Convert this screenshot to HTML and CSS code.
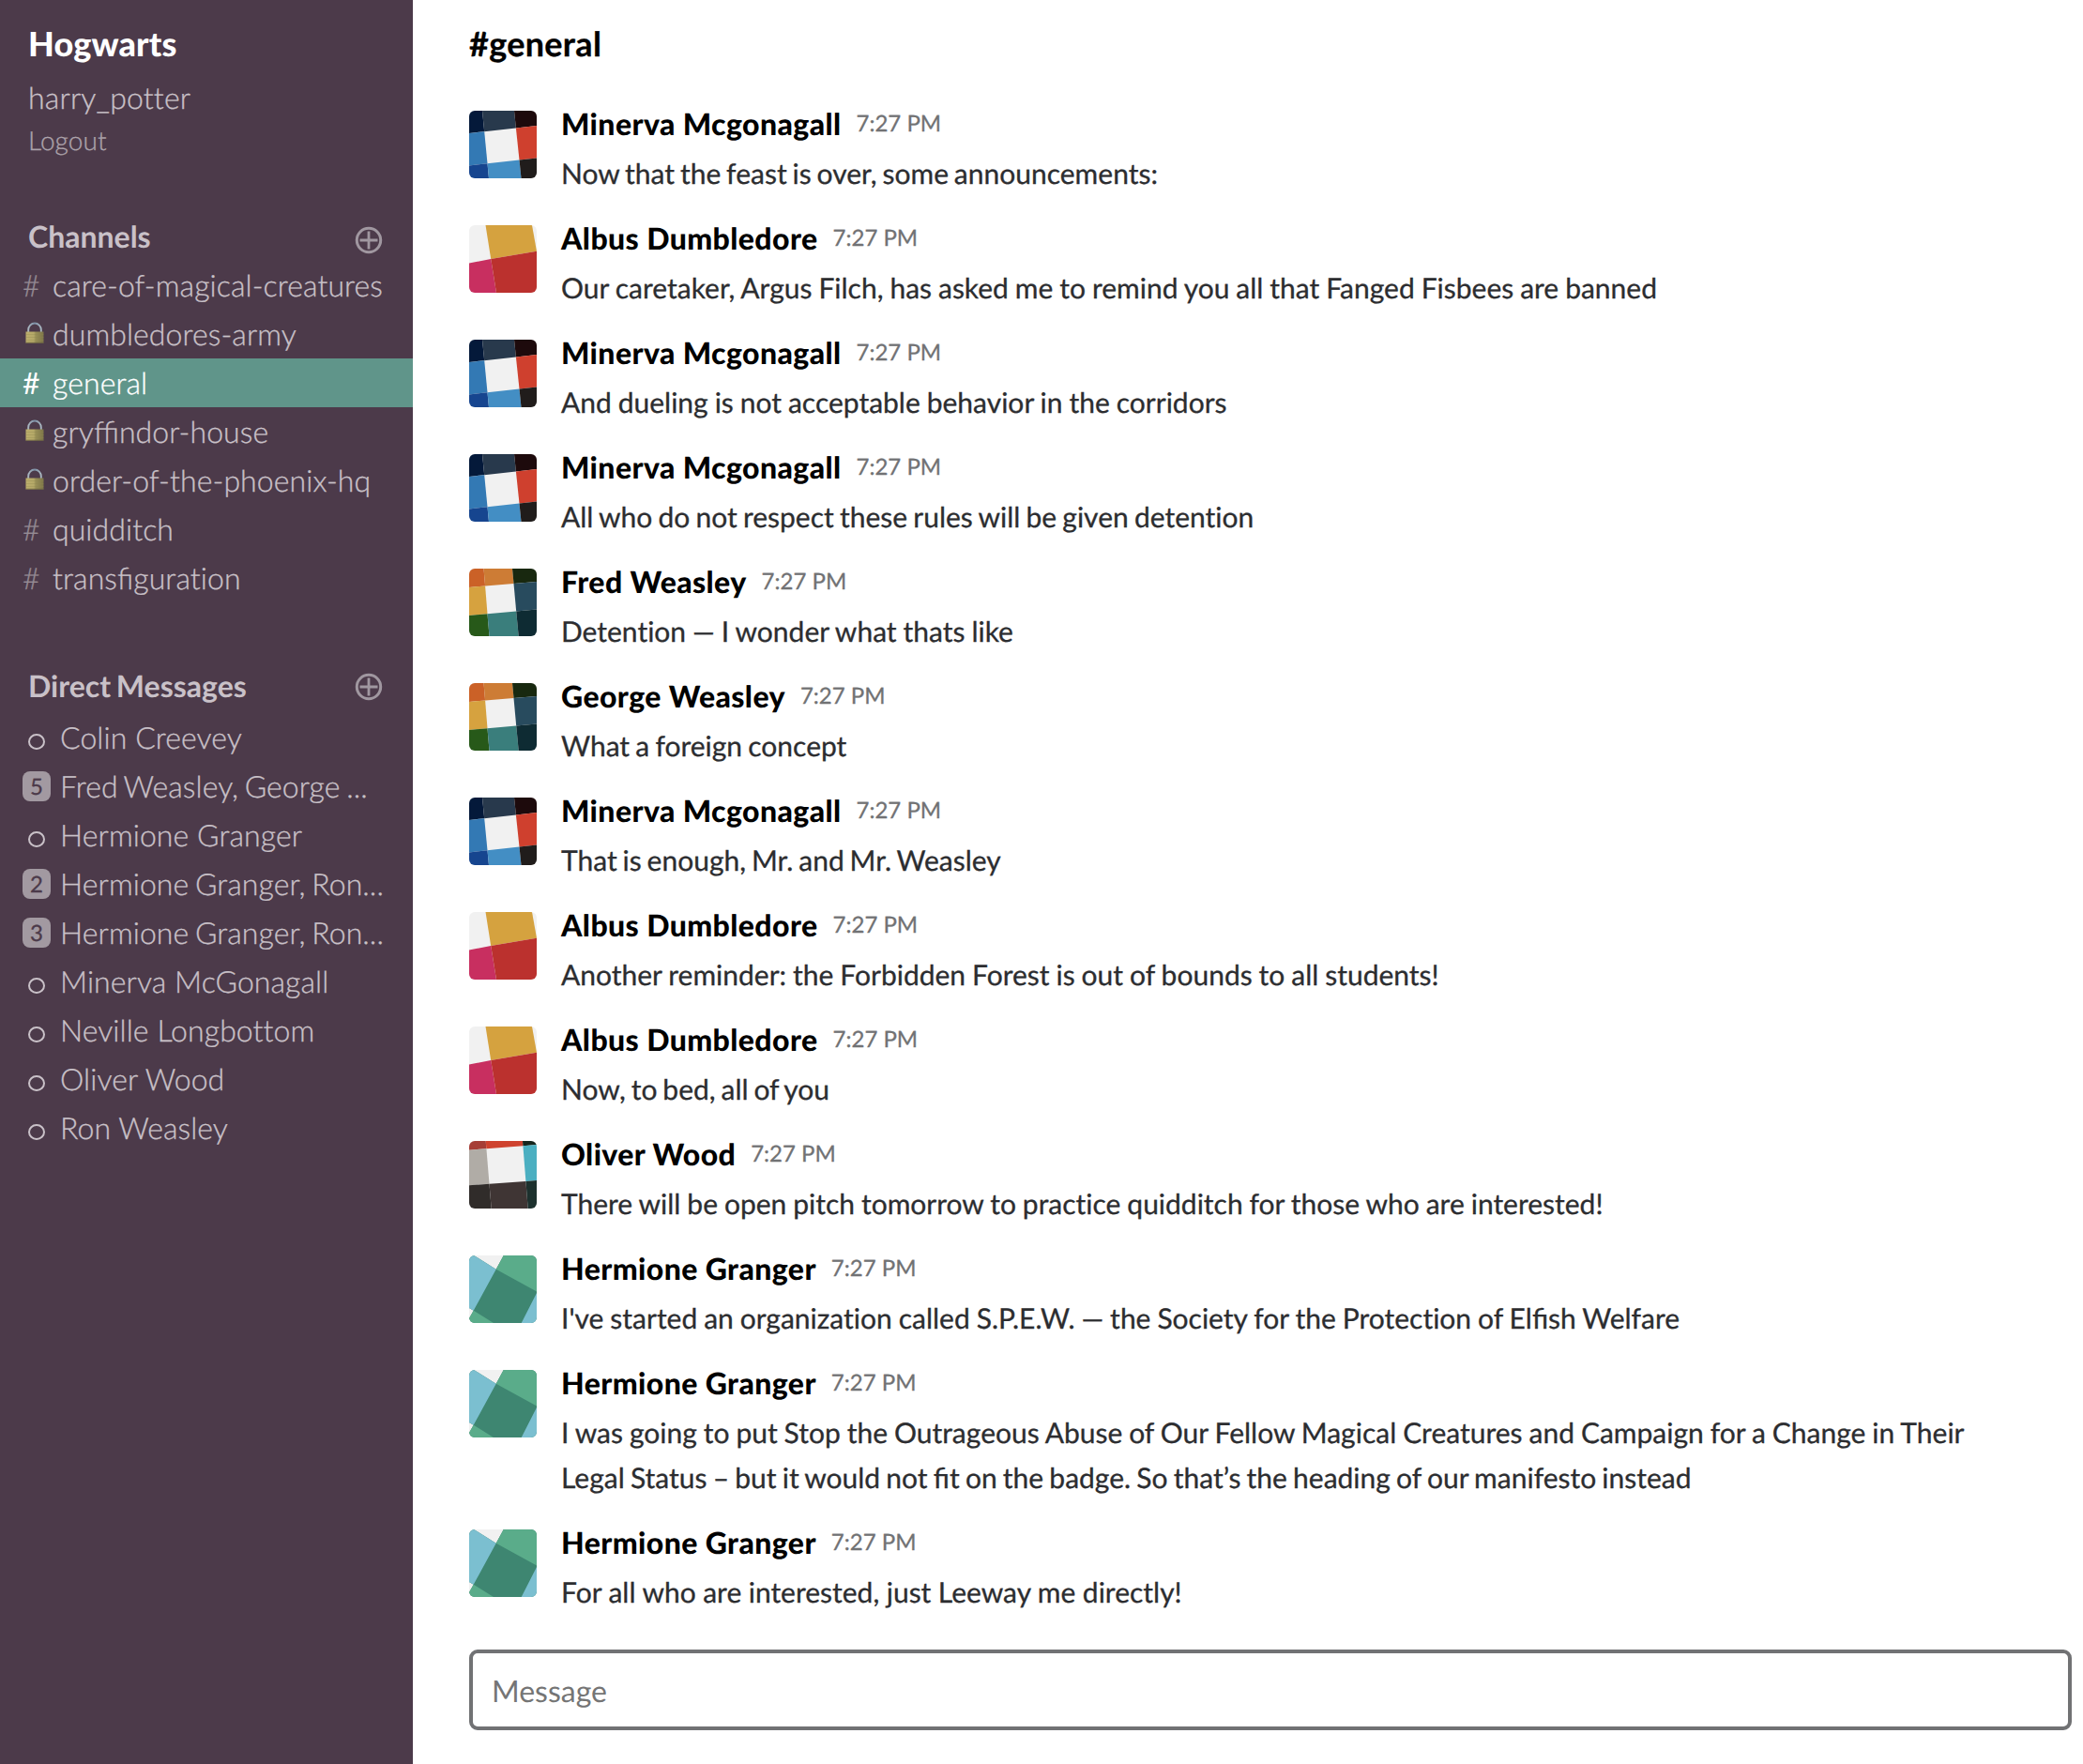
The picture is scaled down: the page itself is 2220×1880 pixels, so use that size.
FILE: index.html
```html
<!DOCTYPE html>
<html lang="en">
<head>
<meta charset="utf-8">
<title>Leeway</title>
<link rel="stylesheet" href="styles.css">
</head>
<body>
<svg class="sprite" aria-hidden="true">
  <defs>
    <linearGradient id="brass" x1="0" x2="1" y1="0" y2="0">
      <stop offset="0" stop-color="#bcae6c"/><stop offset=".45" stop-color="#b5a968"/><stop offset=".55" stop-color="#999057"/><stop offset="1" stop-color="#7d7548"/>
    </linearGradient>
    <linearGradient id="steel" x1="0" x2="1" y1="0" y2="0">
      <stop offset="0" stop-color="#a9b6c0"/><stop offset=".5" stop-color="#7b8fa6"/><stop offset="1" stop-color="#a9b6c0"/>
    </linearGradient>
  </defs>
  <symbol id="plus" viewBox="0 0 30 30"><circle cx="15" cy="15" r="12.7" fill="none" stroke="currentColor" stroke-width="3"/><path d="M15 5.5v19M5.5 15h19" stroke="currentColor" stroke-width="2.8"/></symbol>
  <symbol id="lock" viewBox="0 0 20 24"><path d="M3.2 11V8.5a6.8 7 0 0 1 13.6 0V11" fill="none" stroke="url(#steel)" stroke-width="1.9"/><path d="M.5 10.5h19v12H.5z" fill="url(#brass)"/><path d="M.5 13.5h19M.5 16.5h19M.5 19.5h19" stroke="#8f8650" stroke-width=".6" opacity=".5"/><path d="M.5 22.2h19" stroke="#6f6741" stroke-width=".8"/></symbol>
  <symbol id="minerva" viewBox="0 0 72 72">
    <rect width="72" height="72" fill="#f1f1f1"/>
    <path fill="#04193a" d="M0 0H14L16.2 22.2 0 24z"/><path fill="#28394c" d="M14 0H48L49.9 18.4 16.2 22.2z"/><path fill="#1d0a0c" d="M48 0H72V16L49.9 18.4z"/>
    <path fill="#3379b4" d="M0 24 16.2 22.2 19.5 56.3 0 58.5z"/><path fill="#cf402e" d="M49.9 18.4 72 16V50.5L53.5 52.5z"/>
    <path fill="#16458f" d="M0 58.5 19.5 56.3 21 72H0z"/><path fill="#438ec4" d="M19.5 56.3 53.5 52.5 55.5 72H21z"/><path fill="#201c1b" d="M53.5 52.5 72 50.5V72H55.5z"/>
  </symbol>
  <symbol id="weasley" viewBox="0 0 72 72">
    <rect width="72" height="72" fill="#f1f1f1"/>
    <path fill="#cb6127" d="M0 0H15.5L17.1 18.5 0 20z"/><path fill="#cd7c35" d="M15.5 0H46L47.5 16 17.1 18.5z"/><path fill="#18280f" d="M46 0H72V14L47.5 16z"/>
    <path fill="#d6a23f" d="M0 20 17.1 18.5 19.5 48.2 0 50z"/><path fill="#284b5e" d="M47.5 16 72 14V43.5L50.2 45.5z"/>
    <path fill="#275919" d="M0 50 19.5 48.2 21.5 72H0z"/><path fill="#3a7e7c" d="M19.5 48.2 50.2 45.5 52.7 72H21.5z"/><path fill="#0e2b33" d="M50.2 45.5 72 43.5V72H52.7z"/>
  </symbol>
  <symbol id="oliver" viewBox="0 0 72 72">
    <rect width="72" height="72" fill="#f1f1f1"/>
    <path fill="#a63e36" d="M0 0H17.7L18.4 8.2 0 9.7z"/><path fill="#cf432f" d="M17.7 0H57L57.4 5.2 18.4 8.2z"/><path fill="#16251c" d="M57 0H72V4L57.4 5.2z"/>
    <path fill="#b0aca6" d="M0 9.7 18.4 8.2 21.5 45.7 0 47.3z"/><path fill="#4bafc1" d="M57.4 5.2 72 4V42L60.4 42.9z"/>
    <path fill="#302c2a" d="M0 47.3 21.5 45.7 23.7 72H0z"/><path fill="#3f3534" d="M21.5 45.7 60.4 42.9 62.7 72H23.7z"/><path fill="#1d312e" d="M60.4 42.9 72 42V72H62.7z"/>
  </symbol>
  <symbol id="albus" viewBox="0 0 72 72">
    <rect width="72" height="72" fill="#f1f1f1"/>
    <path fill="#d5a23f" d="M17.5 0H67L72 27.7 23.2 36z"/><path fill="#c82f60" d="M0 40.5 23.2 36 29 72H0z"/><path fill="#bb312e" d="M23.2 36 72 27.7V72H29z"/>
  </symbol>
  <symbol id="hermione" viewBox="0 0 72 72">
    <rect width="72" height="72" fill="#3e8671"/>
    <path fill="#f1f1f1" d="M5 0H36.7L28.7 14.7zM0 56 4.7 58.7 0 67z"/>
    <path fill="#7bbfd0" d="M0 0H5L28.7 14.7 4.7 58.7 0 56zM72 40V72H55.7z"/>
    <path fill="#5aac8a" d="M36.7 0H72V38.5L28.7 14.7zM0 67 4.7 58.7 26 72H0z"/>
  </symbol>
</svg>
<div class="app">
  <aside class="sidebar">
    <h1 class="team">Hogwarts</h1>
    <div class="user">harry_potter</div>
    <div class="logout"><a>Logout</a></div>
    <div class="section-head channels-head"><h2>Channels</h2><svg class="plus"><use href="#plus"/></svg></div>
    <ul class="list channels">
      <li><span class="mark">#</span><span class="label">care-of-magical-creatures</span></li>
      <li><span class="mark"><svg class="lock"><use href="#lock"/></svg></span><span class="label">dumbledores-army</span></li>
      <li class="active"><span class="mark">#</span><span class="label">general</span></li>
      <li><span class="mark"><svg class="lock"><use href="#lock"/></svg></span><span class="label">gry<span class="lig">ffi</span>ndor-house</span></li>
      <li><span class="mark"><svg class="lock"><use href="#lock"/></svg></span><span class="label">order-of-the-phoenix-hq</span></li>
      <li><span class="mark">#</span><span class="label">quidditch</span></li>
      <li><span class="mark">#</span><span class="label">trans<span class="lig">fi</span>guration</span></li>
    </ul>
    <div class="section-head direct-head"><h2>Direct Messages</h2><svg class="plus"><use href="#plus"/></svg></div>
    <ul class="list directs">
      <li><span class="mark"><i class="dot"></i></span><span class="label">Colin Creevey</span></li>
      <li class="group"><span class="mark"><b class="count">5</b></span><span class="label">Fred Weasley, George ...</span></li>
      <li><span class="mark"><i class="dot"></i></span><span class="label">Hermione Granger</span></li>
      <li class="group"><span class="mark"><b class="count">2</b></span><span class="label">Hermione Granger, Ron...</span></li>
      <li class="group"><span class="mark"><b class="count">3</b></span><span class="label">Hermione Granger, Ron...</span></li>
      <li><span class="mark"><i class="dot"></i></span><span class="label">Minerva McGonagall</span></li>
      <li><span class="mark"><i class="dot"></i></span><span class="label">Neville Longbottom</span></li>
      <li><span class="mark"><i class="dot"></i></span><span class="label">Oliver Wood</span></li>
      <li><span class="mark"><i class="dot"></i></span><span class="label">Ron Weasley</span></li>
    </ul>
  </aside>
  <main class="main">
    <h2 class="title">#general</h2>
    <div class="messages">
      <article class="message"><svg class="avatar"><use href="#minerva"/></svg><div class="body"><header><strong>Minerva Mcgonagall</strong><time>7:27 PM</time></header><p class="tight">Now that the feast is over, some announcements:</p></div></article>
      <article class="message"><svg class="avatar"><use href="#albus"/></svg><div class="body"><header><strong>Albus Dumbledore</strong><time>7:27 PM</time></header><p>Our caretaker, Argus Filch, has asked me to remind you all that Fanged Fisbees are banned</p></div></article>
      <article class="message"><svg class="avatar"><use href="#minerva"/></svg><div class="body"><header><strong>Minerva Mcgonagall</strong><time>7:27 PM</time></header><p>And dueling is not acceptable behavior in the corridors</p></div></article>
      <article class="message"><svg class="avatar"><use href="#minerva"/></svg><div class="body"><header><strong>Minerva Mcgonagall</strong><time>7:27 PM</time></header><p class="snug">All who do not respect these rules will be given detention</p></div></article>
      <article class="message"><svg class="avatar"><use href="#weasley"/></svg><div class="body"><header><strong>Fred Weasley</strong><time>7:27 PM</time></header><p>Detention — I wonder what thats like</p></div></article>
      <article class="message"><svg class="avatar"><use href="#weasley"/></svg><div class="body"><header><strong>George Weasley</strong><time>7:27 PM</time></header><p class="snug">What a foreign concept</p></div></article>
      <article class="message"><svg class="avatar"><use href="#minerva"/></svg><div class="body"><header><strong>Minerva Mcgonagall</strong><time>7:27 PM</time></header><p class="tight">That is enough, Mr. and Mr. Weasley</p></div></article>
      <article class="message"><svg class="avatar"><use href="#albus"/></svg><div class="body"><header><strong>Albus Dumbledore</strong><time>7:27 PM</time></header><p>Another reminder: the Forbidden Forest is out of bounds to all students!</p></div></article>
      <article class="message"><svg class="avatar"><use href="#albus"/></svg><div class="body"><header><strong>Albus Dumbledore</strong><time>7:27 PM</time></header><p class="tight">Now, to bed, all of you</p></div></article>
      <article class="message"><svg class="avatar"><use href="#oliver"/></svg><div class="body"><header><strong>Oliver Wood</strong><time>7:27 PM</time></header><p>There will be open pitch tomorrow to practice quidditch for those who are interested!</p></div></article>
      <article class="message"><svg class="avatar"><use href="#hermione"/></svg><div class="body"><header><strong>Hermione Granger</strong><time>7:27 PM</time></header><p>I've started an organization called S.P.E.W. — the Society for the Protection of El<span class="lig">fi</span>sh Welfare</p></div></article>
      <article class="message"><svg class="avatar"><use href="#hermione"/></svg><div class="body"><header><strong>Hermione Granger</strong><time>7:27 PM</time></header><p>I was going to put Stop the Outrageous Abuse of Our Fellow Magical Creatures and Campaign for a Change in Their<br><span class="snug">Legal Status – but it would not <span class="lig">fi</span>t on the badge. So that’s the heading of our manifesto instead</span></p></div></article>
      <article class="message"><svg class="avatar"><use href="#hermione"/></svg><div class="body"><header><strong>Hermione Granger</strong><time>7:27 PM</time></header><p class="wide">For all who are interested, just Leeway me directly!</p></div></article>
    </div>
    <input class="composer" type="text" placeholder="Message">
  </main>
</div>
</body>
</html>
```
FILE: styles.css
```css
* { box-sizing: border-box; margin: 0; padding: 0; }
body { font-family: Lato, "Liberation Sans", sans-serif; font-feature-settings: "liga" 0; background: #fff; text-rendering: geometricPrecision; }
.lig { font-feature-settings: "liga" 1; letter-spacing: 0; }
.sprite { display: block; width: 0; height: 0; overflow: hidden; }
.app { display: grid; grid-template-columns: 440px 1fr; height: 1880px; }

.sidebar { background: #4c3a4a; color: #c9c1c8; padding-top: 24px; font-size: 32px; font-weight: 300; letter-spacing: .08px; -webkit-text-stroke: .3px currentColor; }
.team { color: #fff; font-size: 36px; line-height: 44px; font-weight: 900; padding-left: 30px; letter-spacing: .15px; -webkit-text-stroke: 0; }
.user { line-height: 52px; margin-top: 10px; padding-left: 30px; letter-spacing: .16px; }
.logout { font-size: 28px; line-height: 36px; margin-top: 1px; padding-left: 30px; color: #aca3ab; }
.section-head { display: flex; justify-content: space-between; align-items: center; height: 44px; padding: 0 32px 0 30px; }
.section-head h2 { font-size: 32px; line-height: 44px; font-weight: 700; letter-spacing: 0; word-spacing: -2px; -webkit-text-stroke: 0; }
.channels-head { margin-top: 63px; }
.direct-head { margin-top: 67px; }
.plus { width: 30px; height: 30px; color: #a097a0; margin-top: 8px; }
.direct-head .plus { margin-top: 2px; }
.list { list-style: none; }
.channels { margin-top: 4px; }
.directs { margin-top: 7px; }
.list li { display: flex; height: 52px; line-height: 52px; padding-left: 24px; white-space: nowrap; }
.mark { flex: none; width: 32px; color: #958b94; }
.directs .mark { width: 40px; }
.group .label { word-spacing: -2.2px; }
.active { background: #60958a; color: #fff; }
.active .mark { color: #fff; font-weight: 400; -webkit-text-stroke: 0; }
.lock { display: block; width: 20px; height: 24px; margin: 13px 0 0 3px; }
.dot { display: block; width: 18px; height: 17px; margin: 22px 0 0 6px; border: 2.5px solid #c9c1c8; border-radius: 50%; }
.count { display: block; width: 30px; height: 32px; margin-top: 10px; border-radius: 8px; background: #a299a1; color: #4c3a4a; font-size: 24px; line-height: 33px; font-weight: 400; text-align: center; }

.main { display: flex; flex-direction: column; padding: 24px 12px 36px 60px; }
.title { font-size: 36px; line-height: 44px; font-weight: 700; color: #000; letter-spacing: .3px; -webkit-text-stroke: .3px #000; }
.messages { display: flex; flex-direction: column; gap: 31px; margin-top: 50px; }
.message { display: flex; gap: 26px; }
.avatar { flex: none; width: 72px; height: 72px; border-radius: 6px; }
.body header { display: flex; gap: 16px; height: 28px; line-height: 28px; }
.body strong { font-size: 32px; font-weight: 900; color: #000; letter-spacing: .4px; }
.body time { font-size: 24px; color: #717274; -webkit-text-stroke: .3px #717274; }
.body p { margin-top: 15px; font-size: 30px; line-height: 48px; color: #2c2d30; white-space: nowrap; word-spacing: -.75px; -webkit-text-stroke: .3px #2c2d30; }
.body .snug { word-spacing: -1.5px; }
.body .tight { word-spacing: -1.8px; }
.body .wide { word-spacing: -.2px; }
.composer { width: 100%; height: 86px; margin-top: 37px; border: 4px solid #717274; border-radius: 9px; padding: 1px 20px 0; font: 400 32px Lato, "Liberation Sans", sans-serif; text-rendering: geometricPrecision; background: #fff; outline: 0; }
.composer::placeholder { color: #757575; opacity: 1; }
```
